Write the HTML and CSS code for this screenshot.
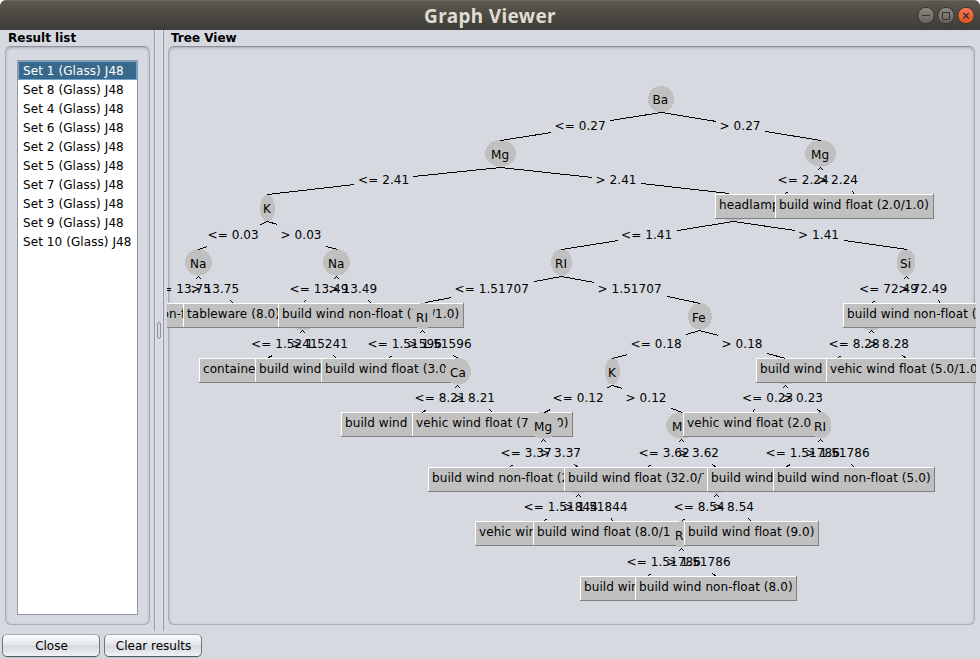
FILE: index.html
```html
<!DOCTYPE html>
<html lang="en">
<head>
<meta charset="utf-8">
<title>Graph Viewer</title>
<link rel="stylesheet" href="styles.css">
</head>
<body>
<div class="window">
  <header class="titlebar">
    <h1 class="title">Graph Viewer</h1>
    <svg class="controls" width="60" height="20" viewBox="0 0 60 20">
      <defs>
        <linearGradient id="grey" x1="0" y1="0" x2="0" y2="1"><stop offset="0" stop-color="#8b887f"/><stop offset="1" stop-color="#65635c"/></linearGradient>
        <linearGradient id="red" x1="0" y1="0" x2="0" y2="1"><stop offset="0" stop-color="#f37b58"/><stop offset="1" stop-color="#e2511f"/></linearGradient>
      </defs>
      <g stroke="#35332e"><circle cx="10" cy="9.500" r="8.2" fill="url(#grey)"/><circle cx="30" cy="9.500" r="8.2" fill="url(#grey)"/><circle cx="50" cy="9.500" r="8.2" fill="url(#red)"/></g>
      <g fill="none" stroke="#35332e"><path d="M6 9.500h8M26.500 6.500h7v7h-7z"/><path stroke-width="1.4" d="M47.300 7l5.400 5.400M52.700 7l-5.400 5.400"/></g>
    </svg>
  </header>
  <main class="split">
    <section class="results">
      <h2 class="caption">Result list</h2>
      <div class="frame results-frame">
        <ul class="list">
          <li class="item selected">Set 1 (Glass) J48</li>
          <li class="item">Set 8 (Glass) J48</li>
          <li class="item">Set 4 (Glass) J48</li>
          <li class="item">Set 6 (Glass) J48</li>
          <li class="item">Set 2 (Glass) J48</li>
          <li class="item">Set 5 (Glass) J48</li>
          <li class="item">Set 7 (Glass) J48</li>
          <li class="item">Set 3 (Glass) J48</li>
          <li class="item">Set 9 (Glass) J48</li>
          <li class="item">Set 10 (Glass) J48</li>
        </ul>
      </div>
    </section>
    <div class="divider"><span class="grip"></span></div>
    <section class="view">
      <h2 class="caption">Tree View</h2>
      <div class="frame view-frame"><svg id="tree" class="tree" viewBox="167 46 809 580"></svg></div>
    </section>
  </main>
  <footer class="actions">
    <button class="button">Close</button>
    <button class="button">Clear results</button>
  </footer>
</div>
<script src="tree.js"></script>
</body>
</html>
```
FILE: styles.css
```css
* { box-sizing: border-box; }
body { margin: 0; background: #fff; font: 12px "DejaVu Sans", sans-serif; color: #000; }
.window { width: 980px; height: 659px; display: flex; flex-direction: column; background: #d6d9e0; border-radius: 6px 6px 0 0; overflow: hidden; }
.titlebar { height: 30px; flex: none; display: grid; grid-template-columns: 64px 1fr 64px; align-items: center; background: linear-gradient(#5b584d, #3c3b37); border-top: 1px solid #6b685d; }
.title { grid-column: 2; margin: 0; text-align: center; font: bold 19px/28px "Noto Sans", sans-serif; color: #dfdbd2; letter-spacing: .35px; }
.controls { display: block; }
.split { height: 601px; flex: none; display: flex; }
.caption { margin: 0; height: 16px; font: bold 12px/17px "DejaVu Sans", sans-serif; padding-left: 3px; }
.results { width: 154px; padding-left: 5px; }
.frame { border: 1px solid #a9acb2; border-top-color: #8e9197; border-radius: 6px; box-shadow: inset 0 1px 3px #a6a9af; }
.results-frame { width: 145px; height: 579px; padding: 13px 11px 10px; }
.list { height: 555px; margin: 0; padding: 0; list-style: none; background: #fff; border: 1px solid #9297a1; }
.item { height: 19px; line-height: 18px; padding: 1px 0 0 5px; letter-spacing: .08px; white-space: nowrap; }
.selected { background: #39698a; color: #fff; box-shadow: inset 0 0 0 1px #73a4d1; }
.divider { width: 10px; height: 601px; border: solid #9599a2; border-width: 0 1px; display: flex; align-items: center; justify-content: center; box-shadow: inset 1px 0 #e0e3e9, inset -1px 0 #e0e3e9; }
.grip { width: 4px; height: 17px; border: 1px solid #8e929b; border-radius: 2px; box-shadow: 0 1px #eef0f4; }
.view { padding-left: 4px; }
.view-frame { width: 807px; height: 579px; }
.tree { display: block; width: 809px; height: 580px; margin: -1px 0 0 -2px; overflow: hidden; }
.edge { fill: none; stroke: #000; stroke-width: 1; shape-rendering: crispEdges; }
.fork { fill: #000; shape-rendering: crispEdges; }
.node { fill: #c0c0c0; shape-rendering: crispEdges; }
.light { fill: #fff; }
.shade { fill: #808080; }
.tree text { font: 12px "DejaVu Sans", sans-serif; white-space: pre; letter-spacing: .08px; }
.actions { height: 28px; display: flex; gap: 4px; padding: 3px 2px 2px; }
.button { width: 98px; height: 23px; padding: 0 0 0 1px; border: 1px solid #71757e; border-top-color: #a4a8b0; border-bottom-color: #565a62; border-radius: 5px; background: linear-gradient(#fafbfc, #e3e6ea 48%, #d5d8de 52%, #f0f2f5); font: 12px "DejaVu Sans", sans-serif; color: #000; box-shadow: 0 1px #c0c3ca; }
```
FILE: tree.js
```js
const svg = document.getElementById('tree');
const add = (tag, attrs, text) => {
  const el = document.createElementNS('http://www.w3.org/2000/svg', tag);
  for (const key in attrs) el.setAttribute(key, attrs[key]);
  if (text) el.textContent = text;
  svg.append(el);
};

// Edge segments: x1, y1, x2, y2
const edges = [
  [661,112,610,120],[551,132,500,140],[661,112,716,121],[765,131,821,140],
  [500,167,413,176],[354,184,267,194],[500,167,592,177],[641,183,729,193],
  [733,221,677,230],[618,240,561,249],[733,221,795,230],[844,240,907,249],
  [267,221,260,224],[267,221,277,224],[207,246,198,249],[326,246,337,249],
  [561,276,534,281],[561,276,594,282],[451,297,425,302],[667,296,700,303],
  [699,330,686,334],[699,330,718,335],[627,354,612,358],[767,353,785,358],
  [612,385,607,387],[612,385,622,388],[550,409,544,412],[671,408,682,412],
  [785,193,788,191],[852,191,854,194],[230,300,233,303],[303,302,305,300],
  [368,300,371,303],[872,302,875,300],[938,300,940,303],[268,357,272,355],
  [333,355,336,358],[389,357,392,355],[453,355,458,358],[838,357,841,355],
  [902,355,906,358],[422,412,426,409],[489,409,492,412],[752,412,754,409],
  [817,409,821,412],[510,466,513,464],[574,464,578,467],[648,466,651,464],
  [712,464,716,467],[786,466,790,464],[851,464,854,467],[544,520,547,518],
  [611,518,612,521],[682,520,685,518],[748,518,751,521],[648,575,651,573],
  [712,573,716,576]
];
const forks = [[820,167],[198,276],[336,276],[906,276],[302,330],[422,330],[871,330],[457,385],
  [785,385],[543,439],[681,439],[820,439],[578,494],[716,494],[681,548]];

// Edge labels: x, baseline, text
const labels = [
  [554.5,130,'<= 0.27'],[719.5,130,'> 0.27'],
  [358,184,'<= 2.41'],[595.5,184,'> 2.41'],[777.5,184,'<= 2.24'],[817,184,'> 2.24'],
  [207.5,239,'<= 0.03'],[280.5,239,'> 0.03'],[621,239,'<= 1.41'],[798,239,'> 1.41'],
  [152,293,'<= 13.75'],[190.5,293,'> 13.75'],[289.5,293,'<= 13.49'],[328.5,293,'> 13.49'],
  [454.5,293,'<= 1.51707'],[597.5,293,'> 1.51707'],[859,293,'<= 72.49'],[898.5,293,'> 72.49'],
  [251,348,'<= 1.5241'],[291.5,348,'> 1.5241'],[367.5,348,'<= 1.51596'],[407.5,348,'> 1.51596'],
  [630.5,348,'<= 0.18'],[721.5,348,'> 0.18'],[828.5,348,'<= 8.28'],[868,348,'> 8.28'],
  [414.5,402,'<= 8.21'],[454,402,'> 8.21'],[552.5,402,'<= 0.12'],[625.5,402,'> 0.12'],
  [742,402,'<= 0.23'],[782,402,'> 0.23'],
  [500.5,457,'<= 3.37'],[540,457,'> 3.37'],[638.5,457,'<= 3.62'],[678,457,'> 3.62'],
  [765.5,457,'<= 1.51786'],[805.5,457,'> 1.51786'],
  [523.5,511,'<= 1.51844'],[563.5,511,'> 1.51844'],[673.5,511,'<= 8.54'],[713,511,'> 8.54'],
  [626.5,566,'<= 1.51786'],[666.5,566,'> 1.51786']
];

// Nodes in paint order. Ellipse: ['o', cx, top, rx, text, textX]. Leaf: ['r', left, top, width, text]
const nodes = [
  ['o',661,86,13,'Ba',652.5],
  ['o',500.5,140,15.5,'Mg',491],['o',820.5,140,15.5,'Mg',811],
  ['o',267.5,195,7.5,'K',263],['o',733.5,195,15,'',0],
  ['r',715,194,100,'headlamps (27.0/1.0)'],['r',775,194,159,'build wind float (2.0/1.0)'],
  ['o',198.5,249,13.5,'Na',190],['o',336.5,249,13.5,'Na',328],['o',561.5,249,10.5,'RI',555],['o',906,249,9.5,'Si',900],
  ['r',83.5,303,186,'build wind non-float (7.0/1.0)'],['r',183,303,97,'tableware (8.0)'],
  ['o',302.5,304,13.5,'',0],['r',278,303,186,'build wind non-float (7.0/1.0)'],
  ['o',422.5,303,10.5,'RI',416],['o',700,303,12,'Fe',692],
  ['o',871.5,304,13.5,'',0],['r',843,303,186,'build wind non-float (7.0)'],
  ['r',199,358,100,'containers (9.0)'],['r',255,358,100,'build wind float (3.0)'],['r',321,358,135,'build wind float (3.0)'],
  ['o',458,358,13,'Ca',450],['o',612.5,358,7.5,'K',608],
  ['o',785.5,358,13,'',0],['r',756,358,100,'build wind float (3.0)'],['r',826,358,161,'vehic wind float (5.0/1.0)'],
  ['r',341,412,120,'build wind float (3.0)'],['r',412,412,161,'vehic wind float (7.0/1.0)'],['o',543.5,412,15.5,'Mg',534],
  ['o',681.5,412,15.5,'Mg',672],['r',683,412,137,'vehic wind float (2.0)'],['o',821,412,10.5,'RI',814],
  ['r',428,467,162,'build wind non-float (2.0)'],['o',578.5,467,13,'',0],['r',564,467,166,'build wind float (32.0/7.0)'],
  ['o',716.5,467,15,'',0],['r',707,467,100,'build wind float (3.0)'],['r',773,467,162,'build wind non-float (5.0)'],
  ['r',475,521,100,'vehic wind float (2.0)'],['r',533,521,159,'build wind float (8.0/1.0)'],
  ['o',681.5,521,10.5,'RI',675],['r',684,521,135,'build wind float (9.0)'],
  ['r',580,576,100,'build wind float (3.0)'],['r',635,576,162,'build wind non-float (8.0)']
];

let clips = 0;
for (const [kind, x, y, w, text, tx] of nodes) {
  if (kind === 'o') {
    add('ellipse', {class: 'node', cx: x, cy: y + 13.3, rx: w, ry: 13.3});
    if (text) add('text', {x: tx, y: y + (y < 100 ? 18 : 19) - (y === 195 ? 1 : 0)}, text);
  } else {
    add('rect', {class: 'node', x, y, width: w, height: 25});
    add('path', {class: 'shade', d: `M${x} ${y + 24}h${w - 1}v-24h1v25h-${w}z`});
    add('path', {class: 'light', d: `M${x} ${y}h${w - 1}v1h-${w - 2}v23h-1z`});
    const id = 'clip' + clips++;
    const clip = document.createElementNS('http://www.w3.org/2000/svg', 'clipPath');
    clip.id = id;
    clip.innerHTML = `<rect x="${x}" y="${y}" width="${w}" height="25"/>`;
    svg.append(clip);
    add('text', {x: x + 4, y: y + 15, 'clip-path': `url(#${id})`}, text);
  }
}
for (const [x1, y1, x2, y2] of edges) add('path', {class: 'edge', d: `M${x1 + .5} ${y1 + .5}L${x2 + .5} ${y2 + .5}`});
for (const [x, y] of forks) add('path', {class: 'fork', d: `M${x} ${y}h1v1h-1zM${x - 1} ${y + 1}h1v1h-1zM${x + 1} ${y + 1}h1v1h-1zM${x - 2} ${y + 2}h1v1h-1zM${x + 2} ${y + 2}h1v1h-1z`});
for (const [x, y, text] of labels) add('text', {x, y}, text);
```
